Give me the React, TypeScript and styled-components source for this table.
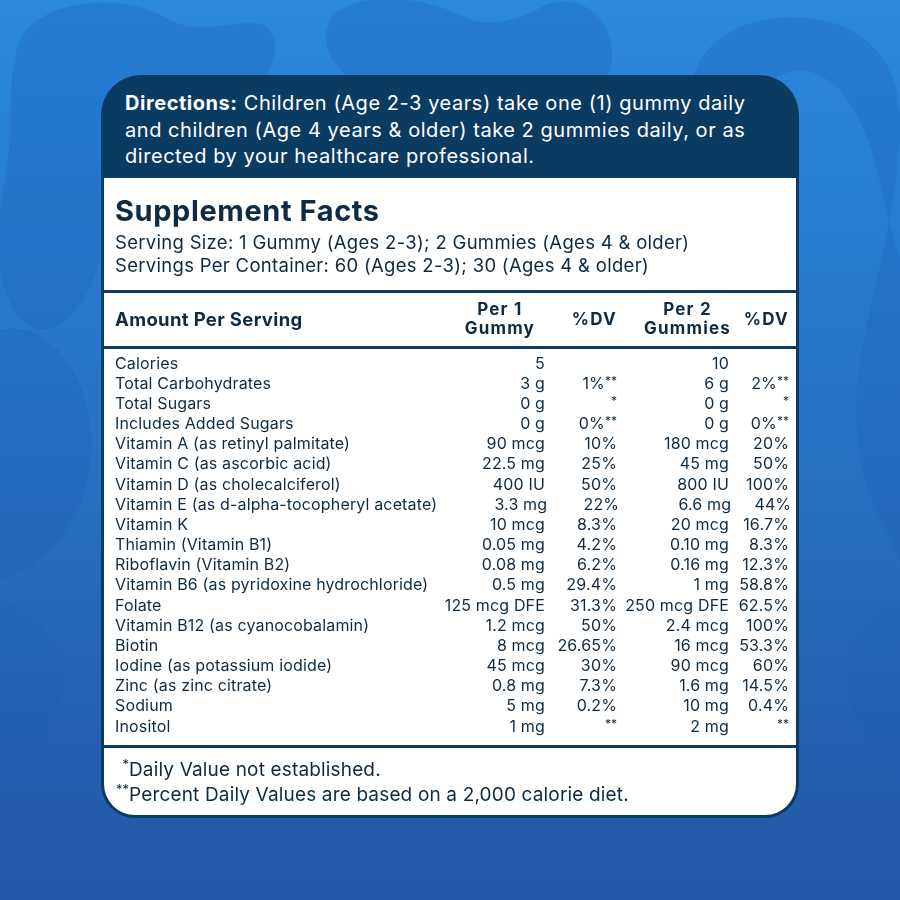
import React from "react";
import styled, { createGlobalStyle } from "styled-components";

const GlobalStyle = createGlobalStyle`
  html, body { margin: 0; padding: 0; }
  body { font-family: Inter, "Liberation Sans", Arial, sans-serif; }
`;

const NAVY = "#0c3b62";
const INK = "#0f2a41";

const Page = styled.div`
  position: relative;
  width: 900px;
  height: 900px;
  overflow: hidden;
  box-sizing: border-box;
  padding: 75px 0 0 101px;
  background: linear-gradient(180deg, #2a88dd 0%, #2773c8 45%, #2257a5 100%);
`;

const Blobs = styled.svg`
  position: absolute;
  left: 0;
  top: 0;
  width: 900px;
  height: 900px;
`;

const Card = styled.div`
  position: relative;
  width: 698px;
  box-sizing: border-box;
  background: ${NAVY};
  border-radius: 40px 40px 34px 34px;
  padding: 0 3px 3px;
`;

const Directions = styled.p`
  margin: 0;
  padding: 15px 10px 8px 21px;
  color: #ffffff;
  font-size: 20px;
  letter-spacing: 0.55px;
  line-height: 26.5px;
  white-space: nowrap;
`;

const Strong = styled.strong`
  font-weight: 700;
`;

const Body = styled.div`
  background: #ffffff;
  border-radius: 0 0 31px 31px;
  color: ${INK};
  overflow: hidden;
`;

const TitleBlock = styled.div`
  padding: 16px 11px 13px;
`;

const Title = styled.h1`
  margin: 0 0 3px;
  font-size: 29px;
  letter-spacing: 0.6px;
  line-height: 34px;
  font-weight: 700;
`;

const Serving = styled.p`
  margin: 0;
  font-size: 18.5px;
  letter-spacing: 0.3px;
  line-height: 23px;
`;

const Grid = styled.div`
  display: grid;
  grid-template-columns: 1fr 110px 72px 112px 60px;
  align-items: center;
`;

const HeadRow = styled(Grid)`
  height: 53px;
  padding: 0 7px 0 11px;
  border-top: 3px solid ${NAVY};
  border-bottom: 3px solid ${NAVY};
  font-weight: 700;
`;

const HeadLabel = styled.div`
  font-size: 18.5px;
  letter-spacing: 0.35px;
`;

const HeadCell = styled.div<{ $shift?: number }>`
  justify-self: end;
  text-align: center;
  font-size: 17px;
  letter-spacing: 1.2px;
  line-height: 19px;
  margin-right: ${(p) => p.$shift ?? 0}px;
`;

const Rows = styled.div`
  padding: 4px 7px 9px 11px;
`;

const Row = styled(Grid)`
  font-size: 16px;
  letter-spacing: 0.15px;
  line-height: 20.17px;
`;

const Label = styled.div`
  white-space: nowrap;
`;

const Value = styled.div`
  text-align: right;
  white-space: nowrap;
`;

const Ast = styled.span`
  font-size: 12px;
  letter-spacing: 0;
  line-height: 0;
  vertical-align: 0.35em;
`;

const Footer = styled.div`
  border-top: 3px solid ${NAVY};
  padding: 9px 11px 8px;
  font-size: 19px;
  letter-spacing: 0.16px;
  line-height: 25px;
`;

const FootLine = styled.div`
  display: grid;
  grid-template-columns: 14px 1fr;
`;

const Mark = styled.span`
  text-align: right;
  font-size: 13px;
  letter-spacing: 0;
  line-height: 0;
  position: relative;
  top: 7px;
`;

type Nut = [string, string, string, string, string];

const rows: Nut[] = [
  ["Calories", "5", "", "10", ""],
  ["Total Carbohydrates", "3 g", "1%**", "6 g", "2%**"],
  ["Total Sugars", "0 g", "*", "0 g", "*"],
  ["Includes Added Sugars", "0 g", "0%**", "0 g", "0%**"],
  ["Vitamin A (as retinyl palmitate)", "90 mcg", "10%", "180 mcg", "20%"],
  ["Vitamin C (as ascorbic acid)", "22.5 mg", "25%", "45 mg", "50%"],
  ["Vitamin D (as cholecalciferol)", "400 IU", "50%", "800 IU", "100%"],
  ["Vitamin E (as d-alpha-tocopheryl acetate)", "3.3 mg", "22%", "6.6 mg", "44%"],
  ["Vitamin K", "10 mcg", "8.3%", "20 mcg", "16.7%"],
  ["Thiamin (Vitamin B1)", "0.05 mg", "4.2%", "0.10 mg", "8.3%"],
  ["Riboflavin (Vitamin B2)", "0.08 mg", "6.2%", "0.16 mg", "12.3%"],
  ["Vitamin B6 (as pyridoxine hydrochloride)", "0.5 mg", "29.4%", "1 mg", "58.8%"],
  ["Folate", "125 mcg DFE", "31.3%", "250 mcg DFE", "62.5%"],
  ["Vitamin B12 (as cyanocobalamin)", "1.2 mcg", "50%", "2.4 mcg", "100%"],
  ["Biotin", "8 mcg", "26.65%", "16 mcg", "53.3%"],
  ["Iodine (as potassium iodide)", "45 mcg", "30%", "90 mcg", "60%"],
  ["Zinc (as zinc citrate)", "0.8 mg", "7.3%", "1.6 mg", "14.5%"],
  ["Sodium", "5 mg", "0.2%", "10 mg", "0.4%"],
  ["Inositol", "1 mg", "**", "2 mg", "**"],
];

function Pct({ v }: { v: string }) {
  const m = v.match(/^([^*]*)(\**)$/);
  const base = m ? m[1] : v;
  const stars = m ? m[2] : "";
  return (
    <Value>
      {base}
      {stars && <Ast>{stars}</Ast>}
    </Value>
  );
}

export default function App() {
  return (
    <>
      <GlobalStyle />
      <Page>
        <Blobs viewBox="0 0 900 900" aria-hidden>
          <g fill="#1f5fb8" opacity="0.28">
            <path d="M20 40 C 40 0, 120 -10, 170 20 C 210 40, 250 10, 270 30 C 290 60, 250 110, 200 120 C 150 130, 110 150, 110 200 C 110 260, 80 330, 40 330 C 0 320, -10 250, 5 180 C 15 130, 5 80, 20 40 Z" />
            <path d="M330 20 C 350 -10, 420 -5, 460 15 C 490 30, 520 20, 545 5 C 590 -10, 620 30, 610 70 C 600 110, 560 120, 520 110 C 480 100, 420 120, 390 100 C 340 80, 315 50, 330 20 Z" />
            <path d="M690 90 C 700 30, 760 10, 820 20 C 880 30, 905 80, 900 140 C 895 220, 870 300, 860 360 C 850 420, 860 480, 880 520 L 900 560 L 900 260 C 880 200, 880 140, 840 90 C 800 50, 760 80, 750 110 C 740 140, 720 170, 700 160 C 680 150, 685 120, 690 90 Z" />
            <path d="M0 330 C 40 320, 80 360, 90 420 C 100 500, 60 560, 0 580 Z" />
            <path d="M0 600 C 40 610, 70 650, 60 700 C 50 740, 20 760, 0 760 Z" opacity="0.6" />
            <path d="M900 600 C 860 610, 840 660, 850 700 C 860 740, 880 760, 900 760 Z" opacity="0.6" />
          </g>
        </Blobs>
        <Card>
          <Directions>
            <Strong>Directions:</Strong> Children (Age 2-3 years) take one (1) gummy daily
            <br />
            and children (Age 4 years &amp; older) take 2 gummies daily, or as
            <br />
            directed by your healthcare professional.
          </Directions>
          <Body>
            <TitleBlock>
              <Title>Supplement Facts</Title>
              <Serving>Serving Size: 1 Gummy (Ages 2-3); 2 Gummies (Ages 4 &amp; older)</Serving>
              <Serving>Servings Per Container: 60 (Ages 2-3); 30 (Ages 4 &amp; older)</Serving>
            </TitleBlock>
            <HeadRow>
              <HeadLabel>Amount Per Serving</HeadLabel>
              <HeadCell $shift={10}>
                Per 1
                <br />
                Gummy
              </HeadCell>
              <HeadCell>%DV</HeadCell>
              <HeadCell $shift={-2}>
                Per 2
                <br />
                Gummies
              </HeadCell>
              <HeadCell>%DV</HeadCell>
            </HeadRow>
            <Rows>
              {rows.map((r) => (
                <Row key={r[0]}>
                  <Label>{r[0]}</Label>
                  <Value>{r[1]}</Value>
                  <Pct v={r[2]} />
                  <Value>{r[3]}</Value>
                  <Pct v={r[4]} />
                </Row>
              ))}
            </Rows>
            <Footer>
              <FootLine>
                <Mark>*</Mark>
                <span>Daily Value not established.</span>
              </FootLine>
              <FootLine>
                <Mark>**</Mark>
                <span>Percent Daily Values are based on a 2,000 calorie diet.</span>
              </FootLine>
            </Footer>
          </Body>
        </Card>
      </Page>
    </>
  );
}
